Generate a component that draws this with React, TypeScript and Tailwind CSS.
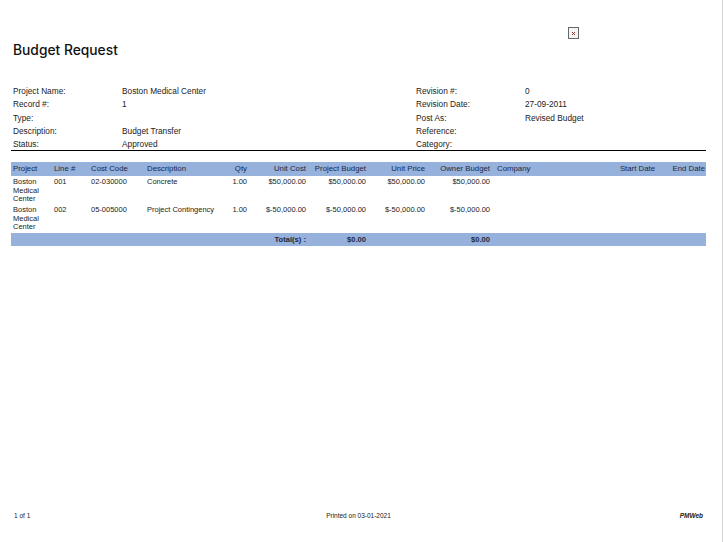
const cols = "grid grid-cols-[43px_37px_56px_73px_28px_59px_60px_59px_65px_115px_50px_50px]";

const leftInfo = [
  ["Project Name:", "Boston Medical Center"],
  ["Record #:", "1"],
  ["Type:", ""],
  ["Description:", "Budget Transfer"],
  ["Status:", "Approved"],
];

const rightInfo = [
  ["Revision #:", "0"],
  ["Revision Date:", "27-09-2011"],
  ["Post As:", "Revised Budget"],
  ["Reference:", ""],
  ["Category:", ""],
];

const rows = [
  ["001", "02-030000", "Concrete", "1.00", "$50,000.00", "$50,000.00", "$50,000.00", "$50,000.00"],
  ["002", "05-005000", "Project Contingency", "1.00", "$-50,000.00", "$-50,000.00", "$-50,000.00", "$-50,000.00"],
];

function InfoColumn({ items, width, labelWidth }: { items: string[][]; width: string; labelWidth: string }) {
  return (
    <div className={width}>
      {items.map(([label, value]) => (
        <div key={label} className="flex h-[13.3px] items-center">
          <div className={labelWidth}>{label}</div>
          <div>{value}</div>
        </div>
      ))}
    </div>
  );
}

export default function App() {
  return (
    <div className="flex h-[542px] w-[723px] flex-col overflow-hidden border-r border-[#d4d4d4] bg-white font-['Liberation_Sans',Arial,sans-serif] text-[8.3px] text-[#222]">
      {/* Title + broken logo */}
      <div className="flex h-[84px] justify-between pl-[13px] pr-[143px] pt-[27px]">
        <h1 className="mt-[14px] font-['Inter',sans-serif] text-[13.8px] leading-[18px] font-medium text-[#111]">Budget Request</h1>
        <div className="flex h-[12px] w-[11px] items-center justify-center border border-[#666] bg-[#f4f4f4]">
          <svg width="7" height="7" viewBox="0 0 7 7">
            <path d="M2 2l3 3M5 2l-3 3" stroke="#8a3a3a" strokeWidth="1" />
          </svg>
        </div>
      </div>

      {/* Info block */}
      <div className="ml-[11px] mr-[16px] flex h-[67px] items-start border-b border-black pl-[2px] pt-[0.5px]">
        <InfoColumn items={leftInfo} width="w-[403px]" labelWidth="w-[109px]" />
        <InfoColumn items={rightInfo} width="w-[280px]" labelWidth="w-[109px]" />
      </div>

      {/* Table */}
      <div className="ml-[11px] mt-[11px] w-[695px]">
        <div className={`${cols} mb-px h-[14px] items-center bg-[#95b1dc] text-[7.8px] text-[#1c2a44]`}>
          <div className="pl-[2px]">Project</div>
          <div>Line #</div>
          <div>Cost Code</div>
          <div>Description</div>
          <div className="pr-px text-right">Qty</div>
          <div className="pr-px text-right">Unit Cost</div>
          <div className="pr-px text-right">Project Budget</div>
          <div className="pr-px text-right">Unit Price</div>
          <div className="pr-px text-right">Owner Budget</div>
          <div className="pl-[6px]">Company</div>
          <div className="pr-px text-right">Start Date</div>
          <div className="pr-px text-right">End Date</div>
        </div>
        {rows.map((r) => (
          <div key={r[0]} className={`${cols} h-[28px] pt-px text-[7.5px] leading-[8.7px]`}>
            <div className="pl-[2px]">Boston<br />Medical<br />Center</div>
            <div>{r[0]}</div>
            <div>{r[1]}</div>
            <div>{r[2]}</div>
            <div className="pr-px text-right">{r[3]}</div>
            <div className="pr-px text-right">{r[4]}</div>
            <div className="pr-px text-right">{r[5]}</div>
            <div className="pr-px text-right">{r[6]}</div>
            <div className="pr-px text-right">{r[7]}</div>
          </div>
        ))}
        <div className={`${cols} h-[13px] items-center bg-[#95b1dc] text-[7.6px] font-bold text-[#1c2a44]`}>
          <div className="col-span-6 pr-px text-right">Total(s) :</div>
          <div className="pr-px text-right">$0.00</div>
          <div />
          <div className="pr-px text-right">$0.00</div>
        </div>
      </div>

      {/* Footer */}
      <div className="mt-auto mb-[21px] grid grid-cols-3 items-center pl-[14px] pr-[19px] text-[6.5px]">
        <div>1 of 1</div>
        <div className="text-center">Printed on 03-01-2021</div>
        <div className="text-right font-bold italic">PMWeb</div>
      </div>
    </div>
  );
}
